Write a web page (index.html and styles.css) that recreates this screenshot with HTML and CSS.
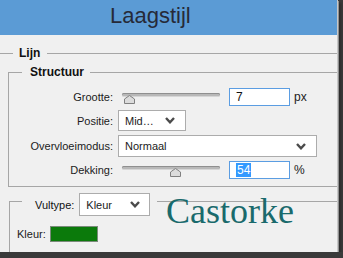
FILE: index.html
```html
<!DOCTYPE html>
<html lang="nl">
<head>
    <meta charset="UTF-8">
    <meta name="viewport" content="width=device-width, initial-scale=1.0">
    <title>Laagstijl</title>
    <link rel="stylesheet" href="styles.css">
</head>
<body>
    <div class="window">
        <div class="titlebar">
            <h1>Laagstijl</h1>
        </div>

        <fieldset class="group group-lijn">
            <legend>Lijn</legend>

            <fieldset class="group group-structuur">
                <legend>Structuur</legend>

                <div class="row">
                    <label class="row-label">Grootte:</label>
                    <div class="slider">
                        <div class="slider-track"></div>
                        <svg class="slider-thumb" style="left: 6px" width="11" height="9" viewBox="0 0 11 9">
                            <path d="M5.5 0.5 L10.5 4 V8.5 H0.5 V4 Z" fill="#dcdcdc" stroke="#808080"/>
                        </svg>
                    </div>
                    <div class="num-input">7</div>
                    <span class="unit">px</span>
                </div>

                <div class="row">
                    <label class="row-label">Positie:</label>
                    <div class="dropdown dropdown-small">
                        <span>Mid…</span>
                        <svg class="chevron" width="10" height="7" viewBox="0 0 10 7">
                            <polyline points="1,1 5,5.3 9,1" fill="none" stroke="#4b4b4b" stroke-width="2.4"/>
                        </svg>
                    </div>
                </div>

                <div class="row">
                    <label class="row-label">Overvloeimodus:</label>
                    <div class="dropdown dropdown-wide">
                        <span>Normaal</span>
                        <svg class="chevron" width="10" height="7" viewBox="0 0 10 7">
                            <polyline points="1,1 5,5.3 9,1" fill="none" stroke="#4b4b4b" stroke-width="2.4"/>
                        </svg>
                    </div>
                </div>

                <div class="row">
                    <label class="row-label">Dekking:</label>
                    <div class="slider">
                        <div class="slider-track"></div>
                        <svg class="slider-thumb" style="left: 52px" width="11" height="9" viewBox="0 0 11 9">
                            <path d="M5.5 0.5 L10.5 4 V8.5 H0.5 V4 Z" fill="#dcdcdc" stroke="#808080"/>
                        </svg>
                    </div>
                    <div class="num-input"><span class="selected">54</span></div>
                    <span class="unit">%</span>
                </div>
            </fieldset>

            <fieldset class="group group-fill">
                <legend>
                    <span class="legend-row">
                        <label>Vultype:</label>
                        <span class="dropdown dropdown-fill">
                            <span>Kleur</span>
                            <svg class="chevron" width="10" height="7" viewBox="0 0 10 7">
                                <polyline points="1,1 5,5.3 9,1" fill="none" stroke="#4b4b4b" stroke-width="2.4"/>
                            </svg>
                        </span>
                    </span>
                </legend>

                <div class="row row-colour">
                    <label>Kleur:</label>
                    <div class="swatch"></div>
                </div>
            </fieldset>
        </fieldset>

        <div class="watermark">Castorke</div>
    </div>
</body>
</html>
```

FILE: styles.css
```css
body {
    margin: 0;
    background-color: #3a3a3a;
    font-family: 'Liberation Sans', Arial, sans-serif;
    font-size: 11px;
    color: #1b1b1b;
}
.window {
    position: relative;
    width: 337px;
    height: 252px;
    background: #f0f0f0;
    overflow: hidden;
    box-shadow: 1px 0 0 #c8c8c8, 2px 1px 0 #909090, 4px 3px 2px #2c2c2c;
}
.titlebar {
    height: 35px;
    background: #5b9bd5;
}
h1 {
    margin: 0;
    padding: 3px 0 0 110px;
    font-size: 22px;
    font-weight: normal;
    line-height: 26px;
    color: #262a38;
}

/* group boxes */
.group {
    margin: 0;
    padding: 0;
    min-width: 0;
    border: 0;
    border-top: 1px solid #a6a6a6;
}
.group legend {
    padding: 0;
    font-size: 12px;
    font-weight: bold;
    line-height: 14px;
    color: #111;
}
.group-lijn {
    margin-top: 11px;
}
.group-lijn > legend {
    margin-left: 13px;
    padding: 0 7px 0 6px;
}
.group-structuur {
    margin: 5px 0 0 8px;
    padding: 9px 0 7px 0;
    border-left: 1px solid #a6a6a6;
    border-bottom: 1px solid #a6a6a6;
    display: flex;
    flex-direction: column;
    gap: 4px;
}
.group-structuur > legend {
    margin-left: 13px;
    padding: 0 6px 0 8px;
}
.group-fill {
    margin: 0 0 0 9px;
    padding: 10px 0 0 7px;
    height: 70px;
    border-left: 1px solid #a6a6a6;
}
.group-fill > legend {
    margin-left: 5px;
    padding: 6px 7px 0 13px;
    font-weight: normal;
    font-size: 11px;
}
.legend-row {
    display: flex;
    align-items: center;
    gap: 5px;
}

/* rows */
.row {
    display: flex;
    align-items: center;
}
.row-label {
    width: 104px;
    margin-right: 5px;
    text-align: right;
}
.slider {
    position: relative;
    width: 106px;
    height: 18px;
    align-self: flex-start;
}
.slider-track {
    margin: 5px 4px 0;
    height: 3px;
    border-radius: 2px;
    background: #b8b8b8;
    box-shadow: inset 0 1px 0 #8f8f8f, 0 1px 0 #d6d6d6;
}
.slider-thumb {
    position: absolute;
    top: 7px;
    display: block;
}
.num-input {
    box-sizing: border-box;
    width: 61px;
    height: 18px;
    margin-left: 5px;
    padding: 1px 0 0 6px;
    background: #fff;
    border: 1px solid #5b9de2;
    font-size: 12px;
    line-height: 15px;
    color: #111;
}
.selected {
    background: #3399ff;
    color: #fff;
    padding: 0 1px;
}
.unit {
    margin-left: 4px;
    font-size: 12px;
}
.dropdown {
    box-sizing: border-box;
    display: flex;
    align-items: center;
    justify-content: space-between;
    height: 21px;
    padding: 0 10px 0 6px;
    background: #fff;
    border: 1px solid #acacac;
    font-size: 11px;
    font-weight: normal;
    color: #1b1b1b;
}
.dropdown-small {
    width: 68px;
}
.dropdown-wide {
    width: 199px;
    height: 22px;
}
.dropdown-fill {
    width: 71px;
    height: 23px;
    padding-right: 9px;
}
.chevron {
    display: block;
}
.row-colour {
    gap: 4px;
}
.swatch {
    width: 48px;
    height: 16px;
    box-sizing: border-box;
    background: #0b7a0b;
    border: 1px solid #7b8a7b;
}

/* watermark over the dialog */
.watermark {
    position: absolute;
    left: 166px;
    top: 193px;
    font-family: 'Liberation Serif', 'Times New Roman', serif;
    font-size: 36px;
    line-height: 36px;
    color: #1a6a6c;
}
```
